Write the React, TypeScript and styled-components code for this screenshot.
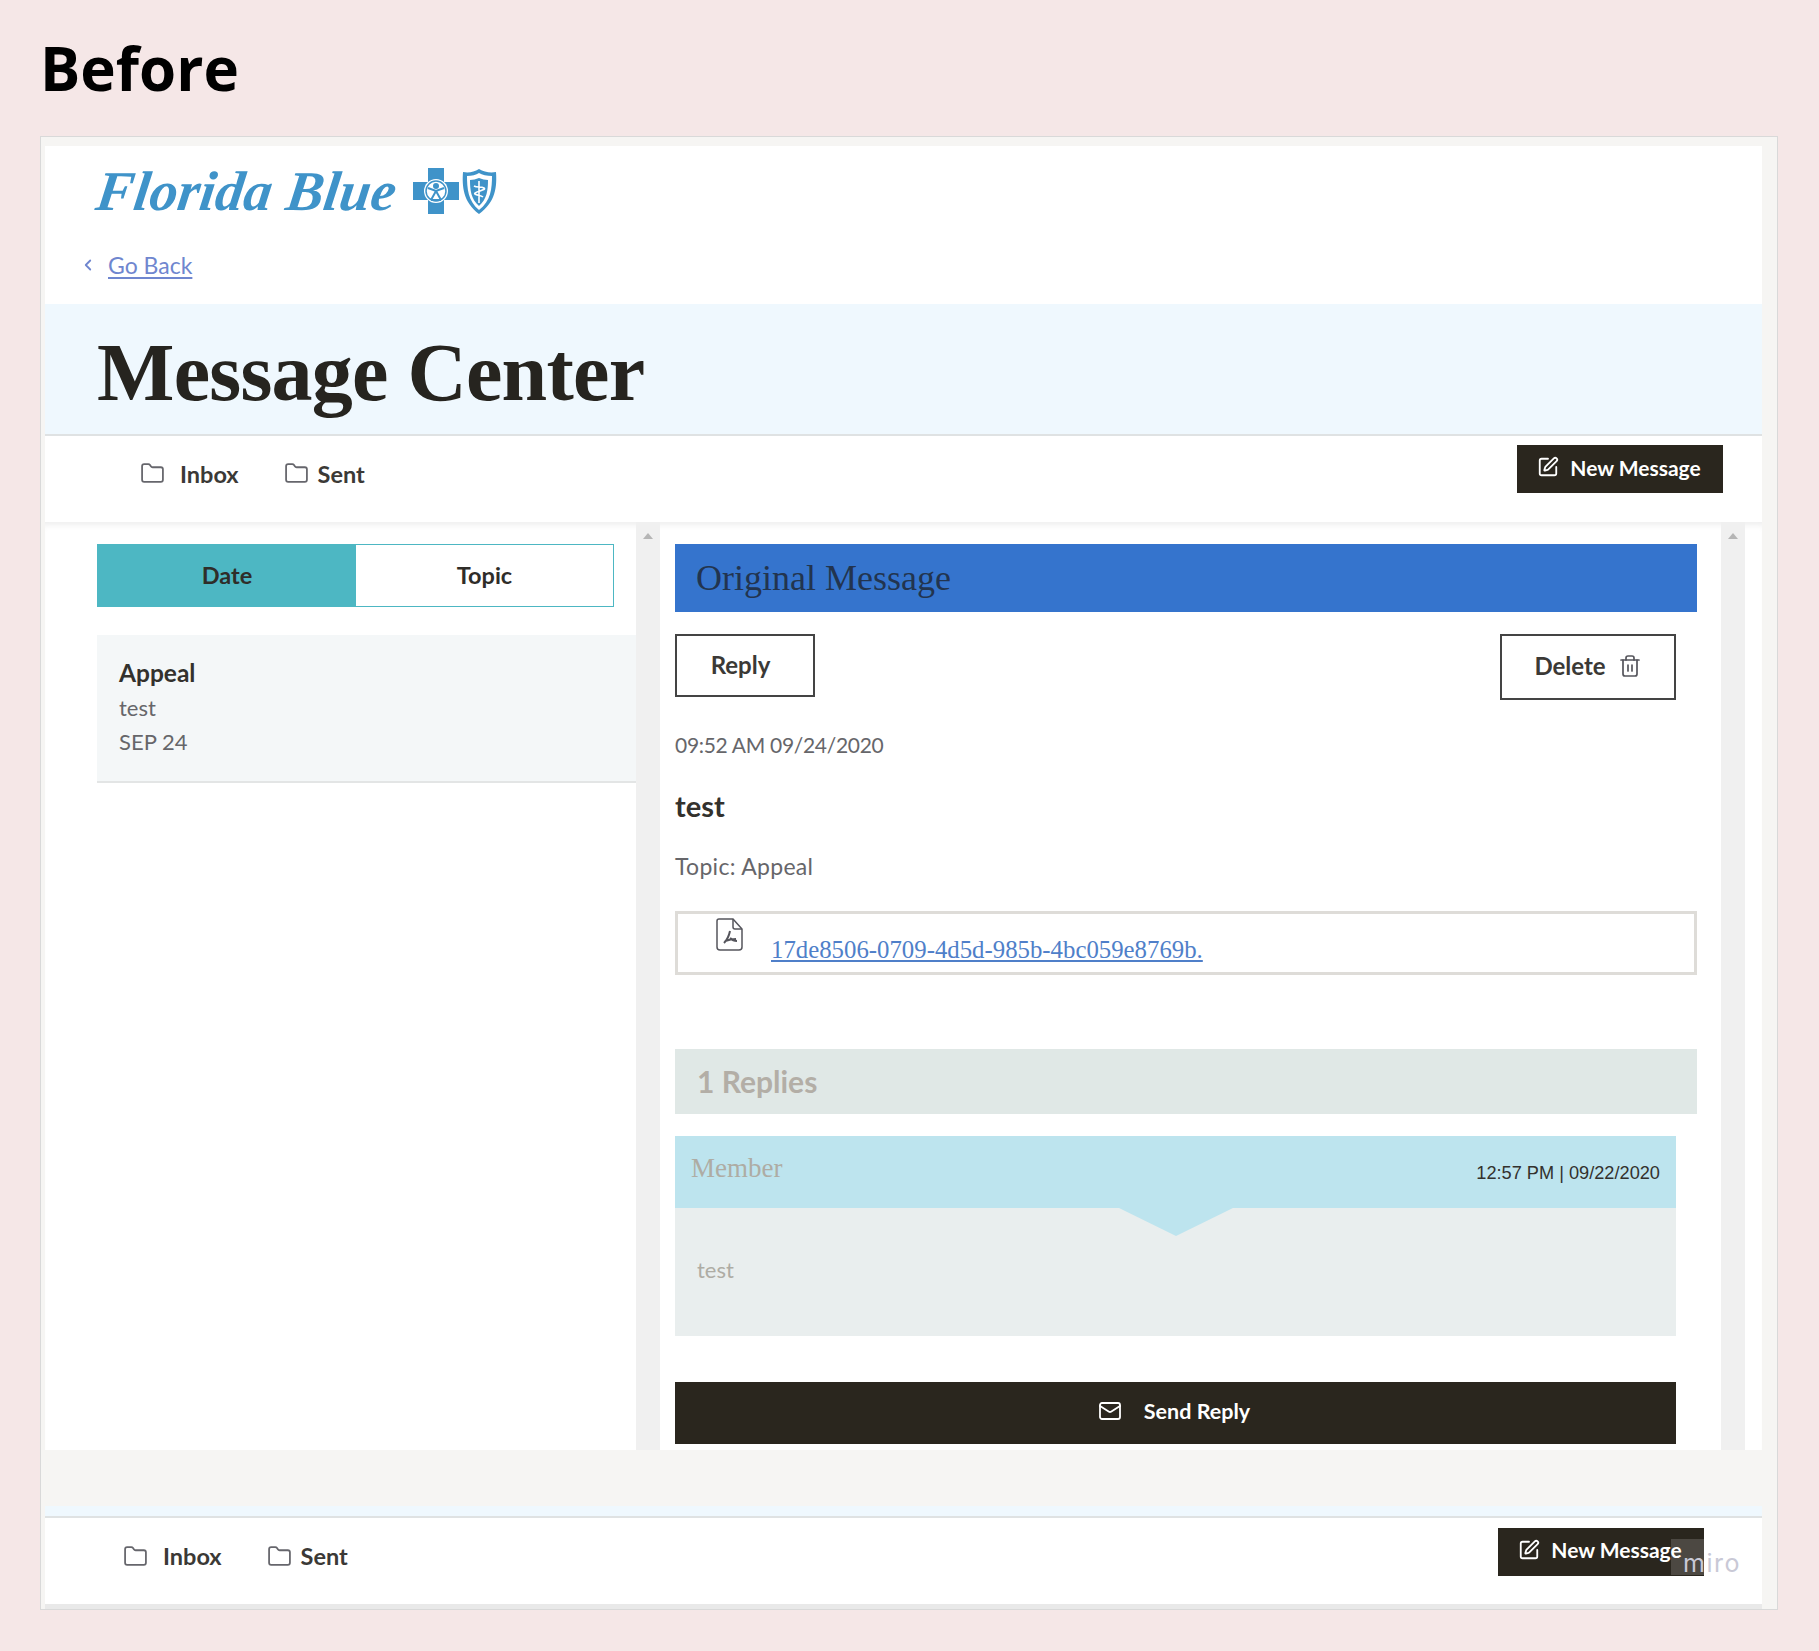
import styled, { createGlobalStyle } from "styled-components";
import { ChevronLeft, Folder, Mail, SquarePen, Trash2 } from "lucide-react";

const GlobalStyle = createGlobalStyle`
	html, body {
		margin: 0;
		padding: 0;
		background: #f5e7e7;
	}
	* {
		box-sizing: border-box;
	}
`;

const sans = `Lato, "Open Sans", sans-serif`;
const serif = `"Liberation Serif", serif`;

const Page = styled.div`
	height: 1651px;
	overflow: hidden;
	padding: 41px 40px 0;
	position: relative;
	width: 1819px;
`;

const Heading = styled.h1`
	color: #000;
	font-family: "Open Sans", sans-serif;
	font-size: 60px;
	font-weight: 700;
	height: 96px;
	line-height: 56px;
	margin: -1px 0 0;
`;

const Card = styled.div`
	background: #f6f5f3;
	border: 1px solid #d9d9d9;
	display: flex;
	flex-direction: column;
	height: 1474px;
	padding: 9px 15px 0 4px;
	position: relative;
	width: 1738px;
`;

const Header = styled.header`
	background: #fff;
	display: flex;
	flex-direction: column;
	height: 158px;
	padding: 21px 0 0 52px;
`;

const Logo = styled.div`
	align-items: center;
	display: flex;
	height: 48px;
`;

const LogoText = styled.span`
	color: #3f93c9;
	font-family: ${serif};
	font-size: 56px;
	font-style: italic;
	font-weight: 700;
	letter-spacing: 0.2px;
	line-height: 48px;
	transform: skewX(-8deg);
	white-space: nowrap;
	width: 316px;
`;

const BackRow = styled.div`
	align-items: center;
	color: #6f86cf;
	display: flex;
	font-family: ${sans};
	font-size: 23px;
	gap: 11px;
	margin: 36px 0 0 -18px;

	a {
		color: #6f86cf;
		text-decoration: underline;
		text-underline-offset: 3px;
	}
`;

const Hero = styled.div`
	background: #eff8fe;
	border-bottom: 2px solid #dfe2e3;
	height: 132px;
	padding: 27px 0 0 52px;
`;

const HeroTitle = styled.h2`
	color: #26241f;
	font-family: ${serif};
	font-size: 82px;
	font-weight: 700;
	letter-spacing: -0.75px;
	line-height: 84px;
	margin: 0;
`;

const Toolbar = styled.div<{ $inset: number; $height: number; $buttonRight: number }>`
	align-items: center;
	background: #fff;
	display: flex;
	height: ${(p) => p.$height}px;
	justify-content: space-between;
	padding: 0 ${(p) => p.$buttonRight}px 0 ${(p) => p.$inset}px;
`;

const FolderLinks = styled.nav`
	display: flex;
	gap: 45px;
	margin-top: -10px;
`;

const FolderLink = styled.span<{ $gap: number }>`
	align-items: center;
	color: #3b3936;
	display: flex;
	font-family: ${sans};
	font-size: 23.5px;
	font-weight: 700;
	gap: ${(p) => p.$gap}px;
	line-height: 26px;

	svg {
		color: #66666c;
	}
`;

const NewMessageButton = styled.button<{ $shift: number }>`
	align-items: center;
	background: #2a261e;
	border: 1px solid #2a261e;
	color: #fff;
	display: flex;
	font-family: ${sans};
	font-size: 21px;
	font-weight: 700;
	gap: 11px;
	height: 48px;
	justify-content: center;
	margin-top: ${(p) => p.$shift}px;
	padding: 0 2px 4px 0;
	width: 206px;
`;

const Main = styled.main`
	background: #fff;
	box-shadow: inset 0 7px 6px -4px rgba(0, 0, 0, 0.07);
	display: flex;
	height: 929px;
`;

const LeftColumn = styled.section`
	padding: 22px 0 0 52px;
	width: 591px;
`;

const SortTabs = styled.div`
	border: 1px solid #4db7c3;
	display: grid;
	grid-template-columns: 258px 1fr;
	height: 63px;
	width: 517px;
`;

const SortTab = styled.div<{ $active?: boolean }>`
	align-items: center;
	background: ${(p) => (p.$active ? "#4db7c3" : "#fff")};
	color: #2f2d29;
	display: flex;
	font-family: ${sans};
	font-size: 23.5px;
	font-weight: 700;
	justify-content: center;
`;

const MessageItem = styled.article`
	background: #f4f7f8;
	border-bottom: 2px solid #e3e5e5;
	color: #66666a;
	display: flex;
	flex-direction: column;
	font-family: ${sans};
	font-size: 22px;
	gap: 8px;
	height: 148px;
	margin-top: 28px;
	padding: 24px 22px 0;

	strong {
		color: #33312d;
		font-size: 24.5px;
		line-height: 28px;
	}

	span {
		line-height: 26px;
	}
`;

const Scrollbar = styled.div`
	background: #f0f0f0;
	display: flex;
	flex: none;
	justify-content: center;
	padding-top: 11px;
	width: 24px;
`;

const ScrollArrow = styled.div`
	border-bottom: 6px solid #b5b5b5;
	border-left: 5px solid transparent;
	border-right: 5px solid transparent;
	height: 0;
	width: 0;
`;

const RightColumn = styled.section`
	display: flex;
	flex-direction: column;
	padding: 22px 0 0 15px;
	width: 1061px;
`;

const TitleBar = styled.div`
	align-items: center;
	background: #3574cd;
	color: #22344f;
	display: flex;
	font-family: ${serif};
	font-size: 36px;
	height: 68px;
	padding-left: 21px;
	width: 1022px;
`;

const ActionRow = styled.div`
	display: flex;
	justify-content: space-between;
	margin-top: 22px;
	width: 1001px;
`;

const OutlineButton = styled.button<{ $width: number; $height: number; $nudge?: number }>`
	align-items: center;
	background: #fff;
	border: 2px solid #444;
	color: #3b3936;
	display: flex;
	font-family: ${sans};
	font-size: 24px;
	font-weight: 700;
	gap: 12px;
	height: ${(p) => p.$height}px;
	justify-content: center;
	padding: 0 ${(p) => p.$nudge ?? 0}px 2px 0;
	width: ${(p) => p.$width}px;

	svg {
		color: #55555c;
	}
`;

const Stamp = styled.div`
	color: #66666a;
	font-family: ${sans};
	font-size: 21px;
	letter-spacing: -0.3px;
	line-height: 26px;
	margin-top: 32px;
`;

const Subject = styled.div`
	color: #33312d;
	font-family: ${sans};
	font-size: 29px;
	font-weight: 700;
	line-height: 32px;
	margin-top: 32px;
`;

const TopicLine = styled(Stamp)`
	font-size: 23px;
	letter-spacing: 0.3px;
	margin-top: 31px;
`;

const Attachment = styled.div`
	align-items: flex-start;
	border: 3px solid #dedcd8;
	display: flex;
	gap: 27px;
	height: 64px;
	margin-top: 32px;
	padding: 4px 0 0 38px;
	width: 1022px;

	a {
		color: #4f7fc9;
		font-family: ${serif};
		font-size: 24.8px;
		line-height: 30px;
		margin-top: 17px;
		text-decoration: underline;
	}
`;

const RepliesBar = styled.div`
	align-items: center;
	background: #e0e8e6;
	color: #b3aea6;
	display: flex;
	font-family: ${sans};
	font-size: 30px;
	font-weight: 700;
	height: 65px;
	margin-top: 74px;
	padding-left: 22px;
	width: 1022px;
`;

const Reply = styled.div`
	margin-top: 22px;
	width: 1001px;
`;

const ReplyHead = styled.div`
	align-items: center;
	background: #bde4ee;
	display: flex;
	height: 72px;
	justify-content: space-between;
	padding: 0 16px;
	position: relative;

	&::after {
		border-left: 57px solid transparent;
		border-right: 57px solid transparent;
		border-top: 28px solid #bde4ee;
		content: "";
		height: 0;
		left: 444px;
		position: absolute;
		top: 100%;
		width: 0;
	}
`;

const ReplyAuthor = styled.span`
	color: #aeaca4;
	font-family: ${serif};
	font-size: 27px;
	margin-top: -6px;
`;

const ReplyTime = styled.span`
	color: #33312d;
	font-family: "Liberation Sans", sans-serif;
	font-size: 18.2px;
	margin-top: 3px;
`;

const ReplyBody = styled.div`
	background: #e9eeee;
	color: #aeaca4;
	font-family: ${sans};
	font-size: 22px;
	height: 128px;
	line-height: 26px;
	padding: 49px 22px 0;
`;

const SendButton = styled.button`
	align-items: center;
	background: #2a261e;
	border: 0;
	color: #fff;
	display: flex;
	flex: none;
	font-family: ${sans};
	font-size: 21.5px;
	font-weight: 700;
	gap: 22px;
	height: 62px;
	justify-content: center;
	margin-top: 46px;
	padding: 0 3px 4px 0;
	width: 1001px;
`;

const FooterBand = styled.div`
	flex: none;
	height: 56px;
`;

const FooterStrip = styled.div`
	background: #eff8fe;
	border-bottom: 2px solid #dfe2e3;
	height: 12px;
`;

const FooterEdge = styled.div`
	background: #e9e9e9;
	height: 5px;
`;

const MiroBadge = styled.div`
	align-items: center;
	bottom: 34px;
	color: #c9c9d6;
	display: flex;
	font-family: "Inter", sans-serif;
	font-size: 25px;
	height: 36px;
	letter-spacing: 1.5px;
	position: absolute;
	right: 38px;
	width: 68px;

	span {
		margin-left: 12px;
		margin-top: 12px;
		position: relative;
	}

	&::before {
		background: rgba(255, 255, 255, 0.16);
		content: "";
		height: 36px;
		left: 0;
		position: absolute;
		top: 0;
		width: 33px;
	}
`;

function CrossShieldMark() {
	return (
		<svg width="88" height="48" viewBox="0 0 88 48" style={{ flex: "none" }}>
			<path d="M15 1h16v14h15v18H31v14H15V33H0V15h15z" fill="#3f93c9" />
			<circle cx="23" cy="24" r="12" fill="#fff" />
			<circle cx="23" cy="24" r="10" fill="none" stroke="#3f93c9" strokeWidth="1.5" />
			<circle cx="23" cy="19" r="3" fill="#3f93c9" />
			<path d="M15 21l8 3 8-3M23 24l-5 9M23 24l5 9M18 33h10" fill="none" stroke="#3f93c9" strokeWidth="2" />
			<path d="M50 5c6 1 11 0 16-3 5 3 11 4 17 3 1 14 0 30-17 42C50 35 49 19 50 5z" fill="#3f93c9" />
			<path d="M54 9c5 0 9-1 12-3 3 2 8 3 13 3 0 12-1 25-13 34C55 34 54 21 54 9z" fill="#fff" />
			<path d="M57 13c3 0 6-1 9-2 3 1 6 2 9 2 0 10-1 19-9 26-8-7-9-16-9-26z" fill="#3f93c9" />
			<path d="M66 14v22M61 19c3 2 7 0 10 2s-7 3-9 5 6 2 8 4" fill="none" stroke="#fff" strokeWidth="1.6" />
		</svg>
	);
}

function PdfFileIcon() {
	return (
		<svg width="28" height="33" viewBox="0 0 28 33" fill="none" stroke="#55555c" strokeWidth="1.5" style={{ flex: "none" }}>
			<path d="M3 1h14l9 10v18a3 3 0 0 1-3 3H4a3 3 0 0 1-3-3V3a2 2 0 0 1 2-2z" />
			<path d="M17 1v8a2 2 0 0 0 2 2h7" />
			<path d="M14 13c-1 5-3 9-6 12M14 20c2 2 4 3 7 3M9 23c3-1 7-2 11-2" strokeWidth="2" />
		</svg>
	);
}

function FolderNav() {
	return (
		<FolderLinks>
			<FolderLink $gap={15}>
				<Folder size={25} strokeWidth={1.7} />
				Inbox
			</FolderLink>
			<FolderLink $gap={9}>
				<Folder size={25} strokeWidth={1.7} />
				Sent
			</FolderLink>
		</FolderLinks>
	);
}

function NewMessage({ shift }: { shift: number }) {
	return (
		<NewMessageButton $shift={shift}>
			<SquarePen size={22} strokeWidth={2} />
			New Message
		</NewMessageButton>
	);
}

export default function App() {
	return (
		<Page>
			<GlobalStyle />
			<Heading>Before</Heading>
			<Card>
				<Header>
					<Logo>
						<LogoText>Florida Blue</LogoText>
						<CrossShieldMark />
					</Logo>
					<BackRow>
						<ChevronLeft size={18} strokeWidth={2.4} />
						<a>Go Back</a>
					</BackRow>
				</Header>
				<Hero>
					<HeroTitle>Message Center</HeroTitle>
				</Hero>
				<Toolbar $inset={95} $height={86} $buttonRight={39}>
					<FolderNav />
					<NewMessage shift={-19} />
				</Toolbar>
				<Main>
					<LeftColumn>
						<SortTabs>
							<SortTab $active>Date</SortTab>
							<SortTab>Topic</SortTab>
						</SortTabs>
						<MessageItem>
							<strong>Appeal</strong>
							<span>test</span>
							<span>SEP 24</span>
						</MessageItem>
					</LeftColumn>
					<Scrollbar>
						<ScrollArrow />
					</Scrollbar>
					<RightColumn>
						<TitleBar>Original Message</TitleBar>
						<ActionRow>
							<OutlineButton $width={140} $height={63} $nudge={9}>
								Reply
							</OutlineButton>
							<OutlineButton $width={176} $height={66}>
								Delete
								<Trash2 size={24} strokeWidth={1.7} />
							</OutlineButton>
						</ActionRow>
						<Stamp>09:52 AM 09/24/2020</Stamp>
						<Subject>test</Subject>
						<TopicLine>Topic: Appeal</TopicLine>
						<Attachment>
							<PdfFileIcon />
							<a>17de8506-0709-4d5d-985b-4bc059e8769b.</a>
						</Attachment>
						<RepliesBar>1 Replies</RepliesBar>
						<Reply>
							<ReplyHead>
								<ReplyAuthor>Member</ReplyAuthor>
								<ReplyTime>12:57 PM | 09/22/2020</ReplyTime>
							</ReplyHead>
							<ReplyBody>test</ReplyBody>
						</Reply>
						<SendButton>
							<Mail size={24} strokeWidth={1.8} />
							Send Reply
						</SendButton>
					</RightColumn>
					<Scrollbar>
						<ScrollArrow />
					</Scrollbar>
				</Main>
				<FooterBand />
				<FooterStrip />
				<Toolbar $inset={78} $height={86} $buttonRight={58}>
					<FolderNav />
					<NewMessage shift={-19} />
				</Toolbar>
				<FooterEdge />
				<MiroBadge>
					<span>miro</span>
				</MiroBadge>
			</Card>
		</Page>
	);
}
